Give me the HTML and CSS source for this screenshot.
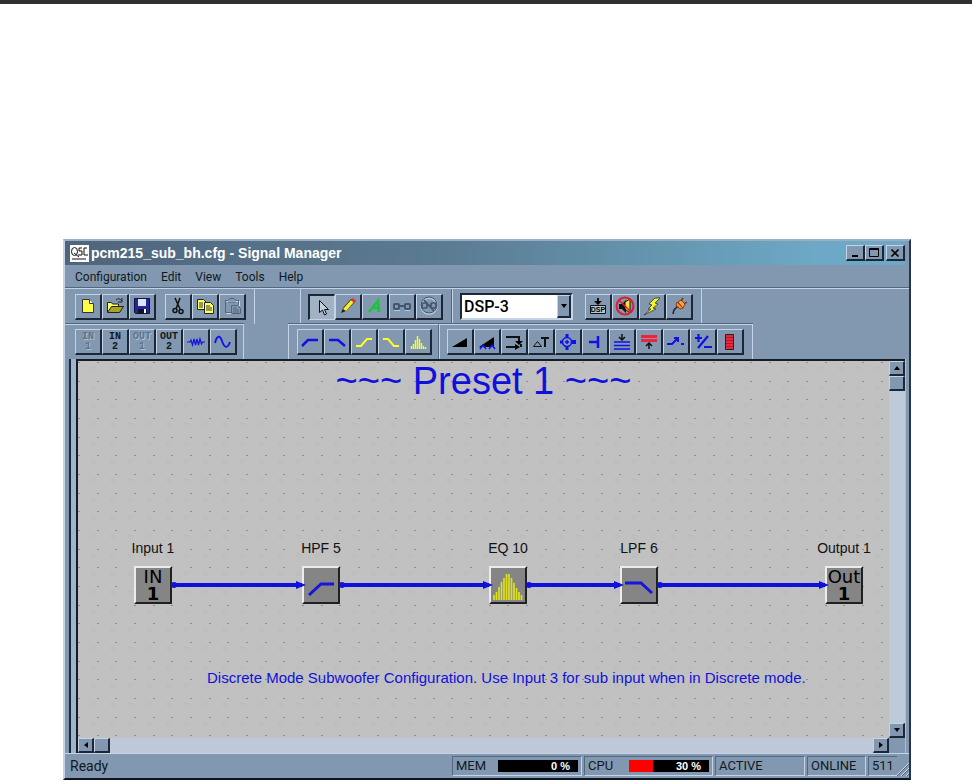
FILE: index.html
```html
<!DOCTYPE html>
<html lang="en">
<head>
<meta charset="utf-8">
<title>Signal Manager</title>
<link rel="stylesheet" href="styles.css">
</head>
<body>
<div class="page-rule"></div>
<main class="window">
  <header class="titlebar">
    <svg class="app-icon" viewBox="0 0 19 17"><rect width="19" height="17" fill="#fff"/><g fill="none" stroke="#111"><ellipse cx="4.500" cy="6.500" rx="3" ry="4"/><path d="M4 8l5 4M12 3H9v3h3v4H8M17 3h-3v7h4M2 14h14" /></g></svg>
    <h1 class="title">pcm215_sub_bh.cfg - Signal Manager</h1>
    <div class="caption">
      <button class="cap" aria-label="Minimize"><svg viewBox="0 0 14 12"><path d="M4 9h6" stroke="#000" stroke-width="2"/></svg></button>
      <button class="cap" aria-label="Maximize"><svg viewBox="0 0 14 12"><path d="M2.500 1.500h9v8h-9zM2.500 2.500h9" fill="none" stroke="#000"/></svg></button>
      <button class="cap cap-close" aria-label="Close"><svg viewBox="0 0 14 12"><path d="M3.500 2.500l7 7M10.500 2.500l-7 7" stroke="#000" stroke-width="1.700"/></svg></button>
    </div>
  </header>
  <nav class="menu">
    <button>Configuration</button><button>Edit</button><button>View</button><button>Tools</button><button>Help</button>
  </nav>

  <div class="toolbar">
    <div class="group file-group">
      <button class="tool" aria-label="New"><svg viewBox="0 0 20 20"><path d="M4.500 3.500h7l4 4v9h-11z" fill="#ff4" stroke="#333"/><path d="M11.500 3.500v4h4" fill="#fff" stroke="#333"/></svg></button>
      <button class="tool" aria-label="Open"><svg viewBox="0 0 20 20"><path d="M2.500 16V6.500h4l1 1.500h6v3" fill="#ff6" stroke="#222"/><path d="M2.500 16.500l4-6h12l-4 6z" fill="#a8a51c" stroke="#222"/><path d="M11 4q3-3 6 1M17 2v4h-4" fill="none" stroke="#222"/></svg></button>
      <button class="tool" aria-label="Save"><svg viewBox="0 0 20 20"><path d="M2.500 2.500h15v15h-14l-1-1z" fill="#2525a0" stroke="#101040"/><path d="M6 3h8v7H6z" fill="#dce6f4"/><path d="M6 13h9v4H6z" fill="#112"/><path d="M12 13h2v4h-2z" fill="#fff"/></svg></button>
      <span class="space"></span>
      <button class="tool" aria-label="Cut"><svg viewBox="0 0 20 20"><path d="M7 2l5 11M12 2L8 13" stroke="#111" stroke-width="1.500"/><g fill="none" stroke="#111" stroke-width="1.500"><circle cx="7" cy="14.500" r="2"/><circle cx="13" cy="15.500" r="2"/></g></svg></button>
      <button class="tool" aria-label="Copy"><svg viewBox="0 0 20 20"><g fill="#ff6" stroke="#222"><path d="M2.500 3.500h6l3 3v7h-9z"/><path d="M9.500 6.500h6l3 3v8h-9z"/></g><path d="M4 7h4M4 9h4M4 11h4M11 10h4M11 12h6M11 14h6" stroke="#333"/></svg></button>
      <button class="tool" aria-label="Paste" disabled><svg viewBox="0 0 20 20"><g fill="none" stroke="#d2deec"><path d="M4.500 5.500h13M17.500 5v5M4.500 17.500h6"/></g><g fill="none" stroke="#52657c"><path d="M9 16.500H3.500v-12H6l2-2h4l2 2h2.500V9M6 6h8M9.500 9.500h6l3 3v5h-9zM11 12h4M11 14h6M11 16h6"/></g></svg></button>
    </div>
    <div class="group edit-group">
      <button class="tool pressed" aria-label="Select"><svg viewBox="0 0 20 20"><path d="M7.500 3.500v12l3-2.500 2 5 2-1-2-4.500h4z" fill="#c3cfdc" stroke="#111"/></svg></button>
      <button class="tool" aria-label="Draw"><svg viewBox="0 0 20 20"><path d="M3 17l2-5 8-9 4 3-9 9z" fill="#222"/><path d="M5 13l8-9 3 2-8 9z" fill="#ffed24"/><path d="M13 4l2-2 3 3-2 2z" fill="#dd3535"/></svg></button>
      <button class="tool" aria-label="Text"><svg viewBox="0 0 20 20"><path d="M4 16L13 5l1 11M7 12h7" fill="none" stroke="#18c63c" stroke-width="2.700"/></svg></button>
      <button class="tool" aria-label="Link" disabled><svg viewBox="0 0 20 20"><path d="M2 14.500h6M13 14.500h5" stroke="#bacbdd"/><g fill="none" stroke="#43566f" stroke-width="2"><rect x="2" y="8" width="5" height="5" rx="1"/><rect x="13" y="8" width="5" height="5" rx="1"/><path d="M7 10h6"/></g></svg></button>
      <button class="tool" aria-label="Unlink" disabled><svg viewBox="0 0 20 20"><circle cx="10" cy="10" r="8" fill="none" stroke="#b4c6d9" stroke-width="2"/><g fill="none" stroke="#43566f" stroke-width="1.700"><circle cx="10" cy="9" r="8" stroke-width="1"/><rect x="3" y="7" width="5" height="5" rx="1"/><rect x="12" y="7" width="5" height="5" rx="1"/><path d="M8 9.500h4M5 4l10 11"/></g></svg></button>
    </div>
    <div class="group dsp-group">
      <div class="combo">
        <select aria-label="Processor"><option>DSP-3</option></select>
        <span class="combo-arrow"></span>
      </div>
      <button class="tool" aria-label="Load DSP"><svg viewBox="0 0 20 20"><path d="M2.500 9.500h15v8h-15z" fill="#b7c6d4" stroke="#111"/><path d="M10 2v5" stroke="#111" stroke-width="2"/><path d="M6 5h8l-4 4z"/><text class="dsp-text" x="10" y="16" text-anchor="middle">DSP</text></svg></button>
      <button class="tool" aria-label="Mute"><svg viewBox="0 0 20 20"><path d="M4 8h3l4-4v13l-4-4H4z" fill="#111"/><path d="M10 6l5-3v14l-5-4z" fill="#ffe32a" stroke="#111"/><circle cx="10" cy="10" r="8.500" fill="none" stroke="#e31b2c" stroke-width="2"/><path d="M4 4l12 12" stroke="#e31b2c" stroke-width="1.500"/></svg></button>
      <button class="tool" aria-label="Go online"><svg viewBox="0 0 20 20"><path d="M13 2L7 8l3 1-4 4 3 0-7 6 12-6-3-1 5-4-3-1 5-5z" fill="#f7f32b" stroke="#333" stroke-width=".8"/></svg></button>
      <button class="tool" aria-label="Go offline"><svg viewBox="0 0 20 20"><path d="M4 18l1-4 4-4" fill="none" stroke="#223" stroke-width="1.500"/><path d="M8 6l6 6-3 1-4-4z" fill="#ff8a20" stroke="#963b12"/><path d="M9 6l3-2 4 4-2 4z" fill="#ffa640" stroke="#8b421c"/><path d="M12 5l2-3M15 8l3-2" stroke="#6c3622" stroke-width="1.500"/></svg></button>
    </div>
  </div>

  <div class="toolbar second">
    <div class="group io-group">
      <button class="tool pin" disabled>IN<br>1</button>
      <button class="tool pin">IN<br>2</button>
      <button class="tool pin" disabled>OUT<br>1</button>
      <button class="tool pin">OUT<br>2</button>
      <button class="tool" aria-label="Noise"><svg viewBox="0 0 20 20"><path d="M1 10h3l1-2 1.500 5L8 7l1.500 6L11 7l1.500 6L14 7l1.500 5 1-2H19" fill="none" stroke="#1010e8" stroke-width="1.200"/></svg></button>
      <button class="tool" aria-label="Sine"><svg viewBox="0 0 20 20"><path d="M2 11C4 3 7 3 9 9s5 9 8 1" fill="none" stroke="#1010e8" stroke-width="1.800"/></svg></button>
    </div>
    <div class="group filter-group">
      <button class="tool" aria-label="High-pass"><svg viewBox="0 0 20 20"><path d="M2 14l6-6h10" fill="none" stroke="#1010e8" stroke-width="2.500"/></svg></button>
      <button class="tool" aria-label="Low-pass"><svg viewBox="0 0 20 20"><path d="M2 8h9l7 6" fill="none" stroke="#1010e8" stroke-width="2.500"/></svg></button>
      <button class="tool" aria-label="High shelf"><svg viewBox="0 0 20 20"><path d="M2 14h5l6-7h5" fill="none" stroke="#ffff24" stroke-width="2"/></svg></button>
      <button class="tool" aria-label="Low shelf"><svg viewBox="0 0 20 20"><path d="M2 7h5l6 7h5" fill="none" stroke="#ffff24" stroke-width="2"/></svg></button>
      <button class="tool" aria-label="Equalizer"><svg viewBox="0 0 20 20"><path d="M3.500 17v-3M5.500 17v-5M7.500 17V8M9.500 17V4M11.500 17V7M13.500 17v-6M15.500 17v-3M17.500 17v-2" stroke="#ffff24" stroke-width="1.400"/></svg></button>
    </div>
    <div class="group block-group">
      <button class="tool" aria-label="Gain"><svg viewBox="0 0 20 20"><path d="M2 15L17 6v9z"/></svg></button>
      <button class="tool" aria-label="Ganged gain"><svg viewBox="0 0 20 20"><path d="M2 15L17 5v10z"/><path d="M3 17l3-4 3 4M12 17l3-4 3 4" fill="none" stroke="#1010e8" stroke-width="1.500"/></svg></button>
      <button class="tool" aria-label="Delay"><svg viewBox="0 0 20 20"><path d="M2 5h13v5M2 15h10M17 12v3" fill="none" stroke="#111" stroke-width="2"/><path d="M11 12l5 3-5 3zM11 9h8l-4 4z"/></svg></button>
      <button class="tool" aria-label="Threshold"><svg viewBox="0 0 20 20"><path d="M2.500 14.500l4-5 4 5z" fill="#879c9e" stroke="#111"/><path d="M10 6h8M14 6v9" stroke="#111" stroke-width="2"/></svg></button>
      <button class="tool" aria-label="Mixer"><svg viewBox="0 0 20 20"><g fill="none" stroke="#1010e8" stroke-width="1.500"><circle cx="9" cy="10" r="4.500"/><path d="M9 8v4M7 10h4"/></g><path d="M7.500 2h3v3h-3zM7.500 15h3v3h-3zM2 8.500h3v3H2zM14 8h4v4h-4z" fill="#1010e8"/></svg></button>
      <button class="tool" aria-label="Terminate"><svg viewBox="0 0 20 20"><path d="M4 10h9M13 4v12" stroke="#1010e8" stroke-width="2.500"/></svg></button>
      <button class="tool" aria-label="Compressor"><svg viewBox="0 0 20 20"><path d="M2 10h16M2 13.500h16M2 17h16" stroke="#1010e8" stroke-width="1.700"/><path d="M10 2v5M7 5l3 3 3-3" fill="none" stroke="#111" stroke-width="1.500"/></svg></button>
      <button class="tool" aria-label="Limiter"><svg viewBox="0 0 20 20"><path d="M2 3h16v3H2zM2 7h16v3H2z" fill="#ee2438"/><path d="M10 17v-5M7 14l3-3 3 3" fill="none" stroke="#111" stroke-width="1.500"/></svg></button>
      <button class="tool" aria-label="Switch"><svg viewBox="0 0 20 20"><path d="M1 12h5l5-5M8 6h4v4M15 12h3" fill="none" stroke="#1010e8" stroke-width="2"/></svg></button>
      <button class="tool" aria-label="Polarity"><svg viewBox="0 0 20 20"><path d="M2 6h7M5.500 2v8M5 16L15 4M11 15h8" stroke="#1010e8" stroke-width="2.200"/></svg></button>
      <button class="tool" aria-label="Meter"><svg viewBox="0 0 20 20"><path d="M5.500 2.500h8v15h-8z" fill="#ed2635" stroke="#222"/><path d="M6 5.500h7M6 8.500h7M6 11.500h7M6 14.500h7" stroke="#9b2038"/></svg></button>
    </div>
  </div>

  <section class="workspace">
    <div class="canvas">
      <svg class="drawing">
        <defs>
          <pattern id="grid" width="56" height="56" patternUnits="userSpaceOnUse">
            <g fill="#8e8e8e"><path d="M0 1h2v1H0zM19 1h2v1h-2zM37 1h2v1h-2zM0 20h2v1H0zM19 20h2v1h-2zM37 20h2v1h-2zM0 38h2v1H0zM19 38h2v1h-2zM37 38h2v1h-2z"/></g>
            <g fill="none" stroke="#bababa"><path d="M14 9q-3-4 2-3t1 3zM33 9q-3-4 2-3t1 3zM51 9q-3-4 2-3t1 3zM14 28q-3-4 2-3t1 3zM33 28q-3-4 2-3t1 3zM51 28q-3-4 2-3t1 3zM14 46q-3-4 2-3t1 3zM33 46q-3-4 2-3t1 3zM51 46q-3-4 2-3t1 3z"/></g>
          </pattern>
        </defs>
        <rect width="100%" height="100%" fill="url(#grid)"/>
        <path d="M94 224h130M262 224h150M449 224h94M580 224h168" stroke="#1010dc" stroke-width="4"/>
      </svg>
      <h2 class="preset">~~~ Preset 1 ~~~</h2>
      <div class="node n-in"><span>Input 1</span><div class="block">IN<br><b>1</b></div></div>
      <div class="node n-hpf"><span>HPF 5</span><div class="block"><svg viewBox="0 0 34 34"><path d="M5 27l12-11h13" fill="none" stroke="#1515df" stroke-width="3"/></svg></div></div>
      <div class="node n-eq"><span>EQ 10</span><div class="block"><svg viewBox="0 0 34 34"><path d="M3 32v-5M5.500 32V24M8 32V19M10.500 32V14M13 32V10M15.500 32V6M18 32V6M20.500 32V10M23 32V15M25.500 32V20M28 32V24M30.500 32v-5" stroke="#dfe01c" stroke-width="1.700"/></svg></div></div>
      <div class="node n-lpf"><span>LPF 6</span><div class="block"><svg viewBox="0 0 34 34"><path d="M3 15h16l11 10" fill="none" stroke="#1515df" stroke-width="3"/></svg></div></div>
      <div class="node n-out"><span>Output 1</span><div class="block">Out<br><b>1</b></div></div>
      <svg class="drawing">
        <g fill="#1010dc"><path id="tip" d="M218 220l10 4-10 4z"/><use href="#tip" x="187"/><use href="#tip" x="318"/><use href="#tip" x="523"/><circle cx="96" cy="224" r="3"/><circle cx="264" cy="224" r="3"/><circle cx="451" cy="224" r="3"/><circle cx="582" cy="224" r="3"/></g>
      </svg>
      <p class="note">Discrete Mode Subwoofer Configuration. Use Input 3 for sub input when in Discrete mode.</p>
    </div>
    <div class="vscroll">
      <div><button class="arrow" aria-label="Scroll up"><svg viewBox="0 0 8 8"><path d="M1 6l3-4 3 4z"/></svg></button><div class="thumb"></div></div>
      <button class="arrow" aria-label="Scroll down"><svg viewBox="0 0 8 8"><path d="M1 2l3 4 3-4z"/></svg></button>
    </div>
    <div class="hscroll">
      <div class="start"><button class="arrow" aria-label="Scroll left"><svg viewBox="0 0 8 8"><path d="M6 1L2 4l4 3z"/></svg></button><div class="thumb"></div></div>
      <button class="arrow" aria-label="Scroll right"><svg viewBox="0 0 8 8"><path d="M2 1l4 3-4 3z"/></svg></button>
    </div>
  </section>

  <footer class="status">
    <span class="ready">Ready</span>
    <div class="panel mem"><span>MEM</span><div class="gauge"><i style="width:0%"></i><b>0 %</b></div></div>
    <div class="panel cpu"><span>CPU</span><div class="gauge"><i style="width:30%"></i><b>30 %</b></div></div>
    <div class="panel active">ACTIVE</div>
    <div class="panel online">ONLINE</div>
    <div class="panel count">511</div>
    <svg class="grip" viewBox="0 0 14 14"><path d="M1 14L14 1M6 14l8-8M11 14l3-3" stroke="#d2deec"/><path d="M2 14L14 2M7 14l7-7M12 14l2-2" stroke="#4d6079"/></svg>
  </footer>
</main>
</body>
</html>
```

FILE: styles.css
```css
:root {
  --face: #8298b0;
  --light: #c4d4e6;
  --dark: #1b2636;
  --shade: #53677f;
  --blue: #1010dc;
}
* { box-sizing: border-box; }
body {
  margin: 0;
  background: #fff;
  color: #101820;
  font: 13px/16px Roboto, "Liberation Sans", sans-serif;
}
button {
  margin: 0;
  padding: 0;
  border: 0;
  background: none;
  color: inherit;
  font: inherit;
}
.page-rule { height: 4px; background: #322f33; }
.window {
  margin: 235px 61px 0 63px;
  background: var(--face);
  border: 2px solid var(--light);
  border-top-color: #9aafc2;
  border-right-color: #26344f;
  border-bottom-color: #0c1420;
}

.titlebar {
  display: flex;
  align-items: center;
  height: 24px;
  margin-right: 4px;
  padding-left: 5px;
  background: linear-gradient(90deg, #4f657c, #5b7b92 45%, #6da9c6 90%);
}
.app-icon { width: 19px; height: 17px; margin-right: 2px; }
.title {
  flex: 1;
  margin: 0;
  color: #fff;
  font: bold 14px/18px "Liberation Sans", sans-serif;
}
.caption { display: flex; }
.cap {
  display: grid;
  place-items: center;
  width: 19px;
  height: 16px;
  background: var(--face);
  border: 1px solid var(--light);
  border-right: 2px solid var(--dark);
  border-bottom: 2px solid var(--dark);
}
.cap svg { width: 14px; height: 12px; }
.cap-close { margin-left: 2px; }

.menu {
  display: flex;
  gap: 14px;
  height: 23px;
  padding-left: 10px;
  align-items: center;
  font-size: 12px;
}

.toolbar {
  display: flex;
  height: 36px;
  border-top: 1px solid var(--light);
  box-shadow: 0 -1px var(--shade);
}
.second { height: 35px; border-top: 0; box-shadow: none; }
.second .group { border-top: 1px solid var(--light); box-shadow: 0 -1px var(--shade); }
.group {
  display: flex;
  align-items: center;
  border-right: 1px solid var(--light);
}
.file-group { padding: 0 8px 0 10px; }
.edit-group { margin-left: 45px; padding: 0 8px 0 7px; border-left: 1px solid var(--light); border-right-color: var(--shade); }
.dsp-group { padding: 0 8px 0 7px; border-left: 1px solid var(--light); }
.io-group { padding: 0 6px 0 10px; }
.filter-group { margin-left: 44px; padding: 0 6px 0 8px; border-left: 1px solid var(--light); border-right-color: var(--shade); }
.block-group { padding: 0 8px 0 7px; border-left: 1px solid var(--light); }
.space { width: 9px; }
.tool {
  display: grid;
  place-items: center;
  width: 27px;
  height: 26px;
  border: 1px solid var(--light);
  border-right: 2px solid var(--dark);
  border-bottom: 2px solid var(--dark);
}
.tool svg { width: 20px; height: 20px; }
.pressed {
  background: #a1b2c5;
  border: 2px solid var(--dark);
  border-right: 1px solid var(--light);
  border-bottom: 1px solid var(--light);
}
.pin { font: bold 10px/10px "Liberation Mono", monospace; }
.pin:disabled { color: #5e728a; text-shadow: 1px 1px #b0c1d4; }
.dsp-text { font: bold 7px "Liberation Sans", sans-serif; }
.combo {
  position: relative;
  width: 113px;
  margin-right: 12px;
  border: 2px solid var(--dark);
  border-right-color: var(--light);
  border-bottom-color: var(--light);
}
.combo select {
  display: block;
  width: 100%;
  height: 23px;
  padding: 0 16px 0 2px;
  appearance: none;
  border: 0;
  border-radius: 0;
  background: #fff;
  color: #000;
  font: 500 16px/22px Roboto, "Liberation Sans", sans-serif;
}
.combo-arrow {
  position: absolute;
  inset: 0 0 0 auto;
  display: grid;
  place-items: center;
  width: 14px;
  background: var(--face);
  border: 1px solid var(--light);
  border-right: 2px solid var(--dark);
  border-bottom: 2px solid var(--dark);
  pointer-events: none;
}
.combo-arrow::after {
  content: "";
  border: 3px solid transparent;
  border-top: 4px solid #000;
  border-bottom: 0;
}

.workspace {
  display: grid;
  grid-template-columns: 1fr 16px;
  grid-template-rows: auto 15px;
  margin: 0 4px 0 11px;
  border-top: 2px solid #141c26;
  border-left: 2px solid #141c26;
  box-shadow: -5px 0 #9fb5ce, -7px 0 #1b2636, 1px 0 #abc0da;
}
.canvas {
  position: relative;
  height: 377px;
  overflow: hidden;
  background: #c1c1c1;
  color: #111;
  font: 14px/18px "Liberation Sans", sans-serif;
}
.drawing { position: absolute; inset: 0; width: 100%; height: 100%; }
.preset {
  position: relative;
  margin: 0;
  color: var(--blue);
  font: 38px/40px "Liberation Sans", sans-serif;
  text-align: center;
}
.node {
  position: absolute;
  top: 178px;
  display: flex;
  flex-direction: column;
  align-items: center;
  gap: 9px;
  width: 70px;
}
.n-in { left: 40px; }
.n-hpf { left: 208px; }
.n-eq { left: 395px; }
.n-lpf { left: 526px; }
.n-out { left: 731px; }
.block {
  width: 38px;
  height: 38px;
  overflow: hidden;
  background: #858585;
  border: 2px solid #ececec;
  border-right-color: #202020;
  border-bottom-color: #202020;
  color: #000;
  font: 500 18px/17px "DejaVu Sans", sans-serif;
  text-align: center;
}
.block svg { display: block; width: 34px; height: 34px; }
.note {
  position: absolute;
  top: 308px;
  left: 129px;
  margin: 0;
  color: var(--blue);
  font-size: 15px;
  white-space: nowrap;
}
.vscroll, .hscroll { display: flex; justify-content: space-between; background: #bccad9; }
.vscroll { flex-direction: column; }
.hscroll { background: #bec8d8; }
.start { display: flex; }
.arrow, .thumb {
  display: grid;
  place-items: center;
  width: 16px;
  height: 15px;
  background: var(--face);
  border: 1px solid var(--light);
  border-right: 2px solid var(--dark);
  border-bottom: 2px solid var(--dark);
}
.arrow svg { width: 8px; height: 8px; }

.status {
  display: flex;
  align-items: center;
  gap: 2px;
  height: 25px;
  padding: 2px 0 2px 5px;
  border-top: 1px solid var(--light);
}
.ready { flex: 1; font-size: 14px; }
.panel {
  display: flex;
  align-items: center;
  justify-content: space-between;
  height: 20px;
  padding: 0 3px;
  border: 1px solid var(--light);
  border-top-color: var(--shade);
  border-left-color: var(--shade);
}
.mem { width: 130px; }
.cpu { width: 129px; }
.active { width: 90px; }
.online { width: 59px; }
.count { width: 29px; border-right: 0; }
.gauge {
  display: flex;
  position: relative;
  width: 80px;
  height: 12px;
  background: #000;
}
.gauge i { background: #f00; }
.gauge b {
  position: absolute;
  right: 8px;
  color: #fff;
  font: bold 11px/13px "Liberation Sans", sans-serif;
}
.grip { align-self: end; width: 14px; height: 14px; margin-left: -4px; }
```
